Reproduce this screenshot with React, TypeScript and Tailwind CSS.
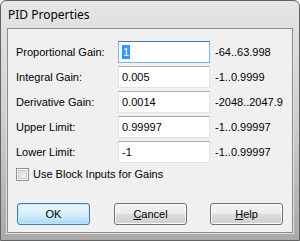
import React from 'react';

const rows = [
  { label: 'Proportional Gain:', value: '1', range: '-64..63.998', focus: true },
  { label: 'Integral Gain:', value: '0.005', range: '-1..0.9999' },
  { label: 'Derivative Gain:', value: '0.0014', range: '-2048..2047.9' },
  { label: 'Upper Limit:', value: '0.99997', range: '-1..0.99997' },
  { label: 'Lower Limit:', value: '-1', range: '-1..0.99997' },
];

const Btn: React.FC<{ def?: boolean; className?: string; children: React.ReactNode }> = ({ def, className, children }) => (
  <div
    className={
      'w-[73px] h-[22px] rounded-[3px] border flex items-center justify-center text-[11px] text-black ' +
      (className ?? '') +
      ' ' +
      (def
        ? 'border-[#3c7fb1] bg-gradient-to-b from-[#eaf6fd] via-[#d9f0fc] to-[#a7d9f5] shadow-[inset_0_0_0_1px_#c4e5f6]'
        : 'border-[#707070] bg-[linear-gradient(to_bottom,#f2f2f2_0%,#ebebeb_50%,#dddddd_51%,#cfcfcf_100%)] shadow-[inset_0_0_0_1px_#fcfcfc]')
    }
  >
    {children}
  </div>
);

export default function App() {
  return (
    <div className="w-[300px] h-[241px] bg-white" style={{ fontFamily: '"Liberation Sans", Arial, sans-serif' }}>
      <div className="w-[300px] h-[241px] rounded-t-[6px] border border-[#646464] bg-gradient-to-b from-[#e6e6e6] via-[#cfcfcf] to-[#a9a9a9] flex flex-col">
        <div className="h-[27px] flex items-center pl-[7px] pt-[1px] text-[12px] text-black" style={{ fontFamily: '"Noto Sans", "Open Sans", sans-serif' }}>
          PID Properties
        </div>
        <div className="mx-[6px] h-[205px] border border-[#8b8b8b] bg-[#f0f0f0] shadow-[0_0_0_1px_#e0e0e0] flex flex-col pl-[8px] pt-[12px]">
          <div className="flex flex-col gap-[3px]">
            {rows.map((r) => (
              <div key={r.label} className="flex items-center h-[22px]">
                <div className="w-[102px] text-[11px] text-black leading-none">{r.label}</div>
                <div
                  className={
                    'w-[92px] h-[22px] bg-white flex items-center pl-[3px] text-[11px] text-black border ' +
                    (r.focus
                      ? 'border-[#7eb4ea] border-t-[#3d7bad]'
                      : 'border-[#e2e3ea] border-t-[#abadb3]')
                  }
                >
                  {r.focus ? (
                    <span className="bg-[#3399ff] text-white px-[1px] leading-[14px]">{r.value}</span>
                  ) : (
                    r.value
                  )}
                </div>
                <div className="ml-[5px] text-[11px] text-black leading-none">{r.range}</div>
              </div>
            ))}
          </div>
          <div className="flex items-center mt-[5px] h-[13px]">
            <div className="w-[13px] h-[13px] border border-[#8f8f8f] bg-white p-[1px]">
              <div className="w-full h-full bg-gradient-to-br from-[#dcdcdc] to-[#f6f6f6] border border-[#c8c8c8]" />
            </div>
            <span className="ml-[4px] text-[11px] text-black">Use Block Inputs for Gains</span>
          </div>
          <div className="flex mt-[22px] pl-[1px]">
            <Btn def>OK</Btn>
            <Btn className="ml-[24px]">
              <span><span className="underline">C</span>ancel</span>
            </Btn>
            <Btn className="ml-[23px]">
              <span><span className="underline">H</span>elp</span>
            </Btn>
          </div>
        </div>
      </div>
    </div>
  );
}
